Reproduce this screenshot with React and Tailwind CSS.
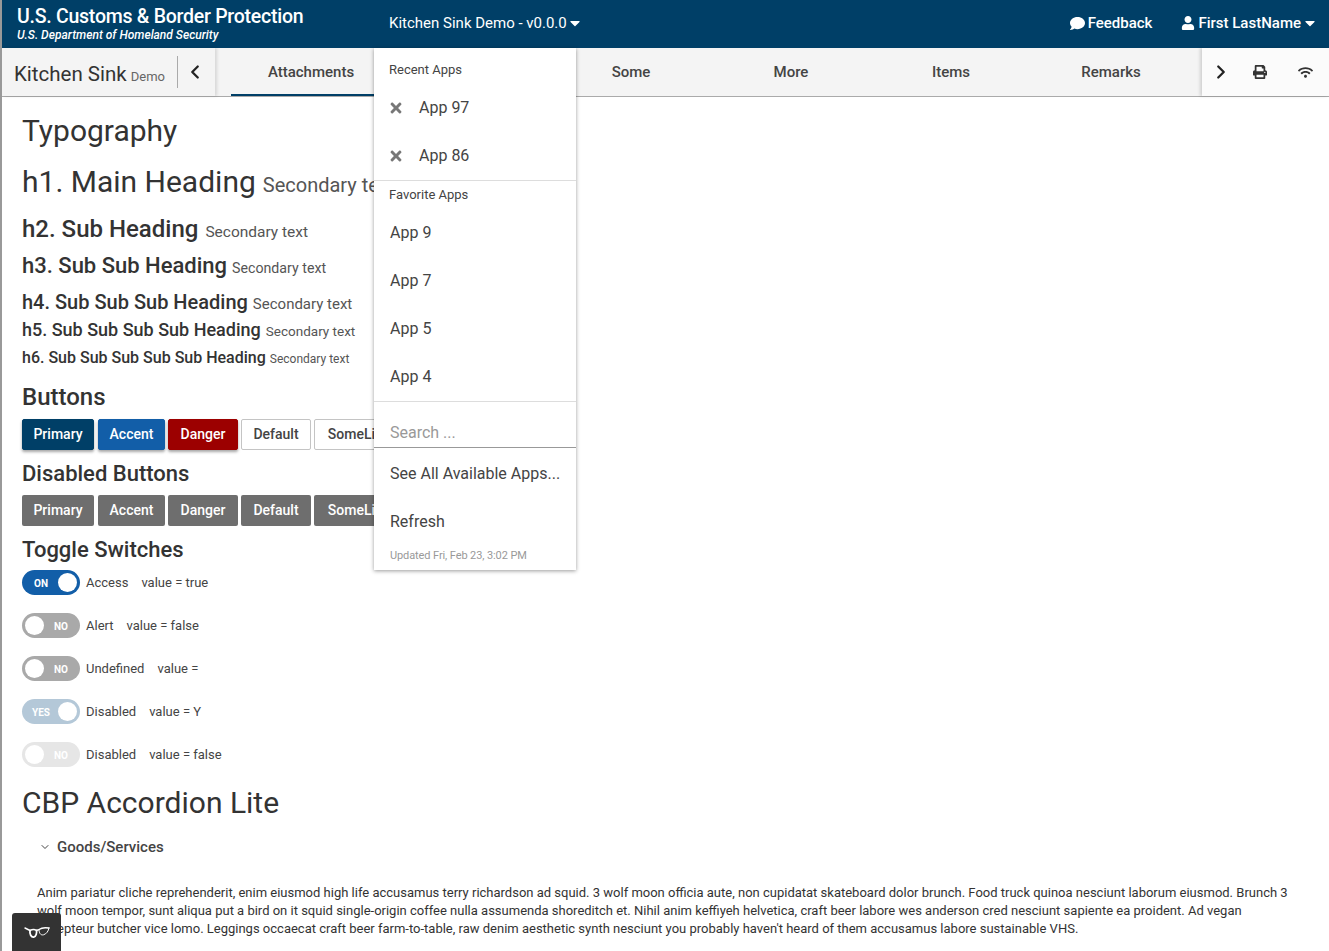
import { ChevronDown, ChevronLeft, ChevronRight } from 'lucide-react'
import { FaCaretDown, FaComment, FaPrint, FaTimes, FaUser, FaWifi } from 'react-icons/fa'

const TABS = ['Attachments', '', 'Some', 'More', 'Items', 'Remarks']

const HEADINGS = [
  { label: 'h1. Main Heading', head: 'text-[30px] h-[48px] pt-[10px]', sub: 'text-[20px] ml-[7px]', weight: 'font-normal' },
  { label: 'h2. Sub Heading', head: 'text-[24px] h-[36px] mt-[14px]', sub: 'text-[15.5px] ml-[7px]', weight: 'font-medium' },
  { label: 'h3. Sub Sub Heading', head: 'text-[22px] h-[32px] mt-[2px]', sub: 'text-[14.2px] ml-[5px]', weight: 'font-medium' },
  { label: 'h4. Sub Sub Sub Heading', head: 'text-[20px] h-[30px] mt-[6px]', sub: 'text-[15px] ml-[5px]', weight: 'font-medium' },
  { label: 'h5. Sub Sub Sub Sub Heading', head: 'text-[18px] h-[28px] -mt-[1px]', sub: 'text-[13.5px] ml-[5px]', weight: 'font-medium' },
  { label: 'h6. Sub Sub Sub Sub Sub Heading', head: 'text-[16px] h-[24px] mt-[2px]', sub: 'text-[12px] ml-[4px]', weight: 'font-medium' },
]

const BUTTONS = [
  { label: 'Primary', w: 'w-[72px] mr-[1px]', color: 'bg-[#003f67] text-white border-[#003f67] shadow-[0_2px_3px_rgba(0,0,0,0.35)]' },
  { label: 'Accent', w: 'w-[67px]', color: 'bg-[#125ea8] text-white border-[#125ea8] shadow-[0_2px_3px_rgba(0,0,0,0.35)]' },
  { label: 'Danger', w: 'w-[70px]', color: 'bg-[#9c0000] text-white border-[#9c0000] shadow-[0_2px_3px_rgba(0,0,0,0.35)]' },
  { label: 'Default', w: 'w-[70px]', color: 'bg-white text-[#444] border-[#c4c4c4]' },
  { label: 'SomeLink', w: 'w-[90px]', color: 'bg-white text-[#444] border-[#c4c4c4]' },
]

const TOGGLES = [
  { text: 'ON', on: true, track: 'bg-[#125ea8]', label: 'Access', value: 'value = true' },
  { text: 'NO', on: false, track: 'bg-[#a9a9a9]', label: 'Alert', value: 'value = false' },
  { text: 'NO', on: false, track: 'bg-[#a9a9a9]', label: 'Undefined', value: 'value =' },
  { text: 'YES', on: true, track: 'bg-[#b4c8d8]', label: 'Disabled', value: 'value = Y' },
  { text: 'NO', on: false, track: 'bg-[#e6e6e6]', label: 'Disabled', value: 'value = false' },
]

function Toggle({ text, on, track, label, value }) {
  return (
    <div className="flex items-center h-[25px] mb-[18px]">
      <div className={`flex items-center justify-between w-[58px] h-[25px] rounded-full px-[3px] ${track} ${on ? '' : 'flex-row-reverse'}`}>
        <span className="w-[32px] pt-[1px] text-center text-[10px] font-bold text-white">{text}</span>
        <span className="w-[19px] h-[19px] rounded-full bg-white" />
      </div>
      <span className="ml-[6px] text-[13px] text-[#444]">{label}</span>
      <span className="ml-[13px] text-[13px] text-[#444]">{value}</span>
    </div>
  )
}

function AppMenu() {
  return (
    <div className="absolute left-[372px] top-[48px] z-20 w-[202px] h-[522px] bg-white text-[#444] shadow-[0_1px_4px_rgba(0,0,0,0.4)]">
      <div className="h-[36px] pt-[14px] pl-[15px] text-[13px] leading-[16px]">Recent Apps</div>
      {['App 97', 'App 86'].map(a => (
        <div key={a} className="flex items-center h-[48px] pl-[15px] text-[16px]">
          <FaTimes size={16} className="text-[#777] mr-[15px] -ml-[1px]" />
          {a}
        </div>
      ))}
      <div className="border-t border-[#ddd] h-[29px] pt-[6px] pl-[15px] text-[13px] leading-[16px]">Favorite Apps</div>
      {['App 9', 'App 7', 'App 5', 'App 4'].map(a => (
        <div key={a} className="flex items-center h-[48px] pl-[16px] text-[16px]">{a}</div>
      ))}
      <div className="border-t border-[#ddd] pt-[21px]">
        <div className="border-b border-[#999] h-[25px] pl-[16px] text-[16px] leading-[19px] text-[#999]">Search ...</div>
      </div>
      <div className="flex items-center h-[52px] pl-[16px] text-[16px]">See All Available Apps...</div>
      <div className="flex items-center h-[44px] pl-[16px] text-[16px]">Refresh</div>
      <div className="pl-[16px] pt-[4px] text-[11px] tracking-[-0.1px] text-[#999]">Updated Fri, Feb 23, 3:02 PM</div>
    </div>
  )
}

export default function App() {
  return (
    <div className="relative h-[951px] overflow-hidden bg-white border-l-2 border-[#999] font-['Roboto',sans-serif] text-[#333]">
      {/* Top bar */}
      <header className="flex items-center h-[48px] bg-[#003f67] text-white -ml-[1px]">
        <div className="w-[372px] pl-[16px] shrink-0 -mt-[1px]">
          <div className="text-[19.5px] font-medium leading-[22px] tracking-[-0.25px]">U.S. Customs &amp; Border Protection</div>
          <div className="text-[12px] font-medium italic leading-[14px]">U.S. Department of Homeland Security</div>
        </div>
        <div className="flex items-center pl-[16px] pb-[2px] text-[15px]">
          Kitchen Sink Demo - v0.0.0
          <FaCaretDown size={16} />
        </div>
        <div className="flex items-center ml-auto pr-[11px] pb-[2px] text-[15px] font-medium">
          <FaComment size={15} className="mr-[3px]" />
          Feedback
          <FaUser size={14} className="ml-[29px] mr-[3px]" />
          First LastName
          <FaCaretDown size={16} className="ml-[1px]" />
        </div>
      </header>

      {/* Tab bar */}
      <div className="flex items-stretch h-[49px] bg-[#f4f4f4] border-b border-[#aaa]">
        <div className="flex items-center w-[213px] shrink-0 shadow-[2px_0_3px_rgba(0,0,0,0.12)] z-10">
          <div className="flex items-baseline whitespace-nowrap w-[176px] h-[32px] pl-[12px] border-r border-[#aaa] pt-[3px]">
            <span className="text-[20.5px]">Kitchen Sink</span>
            <span className="ml-[4px] text-[13px] text-[#666]">Demo</span>
          </div>
          <ChevronLeft size={22} strokeWidth={2.5} className="ml-[6px] text-[#222]" />
        </div>
        <div className="flex flex-1 pl-[16px]">
          {TABS.map((t, i) => (
            <div key={i} className={`flex items-center justify-center w-[160px] text-[15px] font-medium text-[#444] ${i === 0 ? 'pt-[2px] border-b-2 border-[#003f67]' : ''}`}>{t}</div>
          ))}
        </div>
        <div className="flex items-center w-[127px] shrink-0 bg-[#fbfbfb] shadow-[-2px_0_3px_rgba(0,0,0,0.15)] z-10">
          <ChevronRight size={22} strokeWidth={2.5} className="ml-[8px] text-[#222]" />
          <FaPrint size={14} className="ml-[21px] text-[#333]" />
          <FaWifi size={15} className="ml-[31px] text-[#333]" />
        </div>
      </div>

      <AppMenu />

      {/* Page content */}
      <main className="pl-[20px] pr-[40px]">
        <h2 className="text-[30px] leading-[36px] mt-[16px] text-[#333]">Typography</h2>
        {HEADINGS.map(h => (
          <div key={h.label} className={`flex items-baseline whitespace-nowrap ${h.head} ${h.weight}`}>
            {h.label}
            <span className={`font-normal text-[#555] ${h.sub}`}>Secondary text</span>
          </div>
        ))}

        <h3 className="text-[24px] leading-[32px] font-medium mt-[11px]">Buttons</h3>
        <div className="flex gap-[3px] mt-[6px]">
          {BUTTONS.map(b => (
            <div key={b.label} className={`flex items-center justify-center h-[31px] rounded-[2px] border text-[14px] font-medium ${b.w} ${b.color}`}>{b.label}</div>
          ))}
        </div>

        <h3 className="text-[22px] leading-[32px] font-medium mt-[8px]">Disabled Buttons</h3>
        <div className="flex gap-[3px] mt-[5px]">
          {BUTTONS.map(b => (
            <div key={b.label} className={`flex items-center justify-center h-[31px] rounded-[2px] bg-[#6e6e6e] text-white text-[14px] font-medium ${b.w}`}>{b.label}</div>
          ))}
        </div>

        <h3 className="text-[22px] leading-[32px] font-medium mt-[8px] mb-[4px]">Toggle Switches</h3>
        {TOGGLES.map((t, i) => <Toggle key={i} {...t} />)}

        <h2 className="text-[30px] leading-[36px] mt-[1px]">CBP Accordion Lite</h2>
        <div className="flex items-center mt-[15px] ml-[17px] text-[15px] font-medium text-[#444]">
          <ChevronDown size={12} className="mr-[6px]" />
          Goods/Services
        </div>
        <p className="mt-[25px] ml-[15px] text-[13px] leading-[18px] text-[#333]">
          Anim pariatur cliche reprehenderit, enim eiusmod high life accusamus terry richardson ad squid. 3 wolf moon officia aute, non cupidatat skateboard dolor brunch. Food truck quinoa nesciunt laborum eiusmod. Brunch 3 wolf moon tempor, sunt aliqua put a bird on it squid single-origin coffee nulla assumenda shoreditch et. Nihil anim keffiyeh helvetica, craft beer labore wes anderson cred nesciunt sapiente ea proident. Ad vegan excepteur butcher vice lomo. Leggings occaecat craft beer farm-to-table, raw denim aesthetic synth nesciunt you probably haven't heard of them accusamus labore sustainable VHS.
        </p>
      </main>

      {/* Floating glasses button */}
      <div className="absolute left-[10px] top-[913px] z-20 flex items-center justify-center w-[49px] h-[38px] rounded-t-[3px] bg-[#333]">
        <svg width="26" height="14" viewBox="0 0 26 14" fill="none" stroke="white" strokeWidth="1.4" strokeLinecap="round" strokeLinejoin="round">
          <path d="M1 3 L6 5.5 C8 4.5 11 4.5 12.5 5.5 C13.5 5 14.5 5 15 4.5 C17 3 22 2.5 25 3" />
          <path d="M6 5.5 C5.5 9 7 12.5 10 12 C12 11.5 13 8 12.5 5.5" strokeWidth="1.8" />
          <path d="M15 4.5 C15 8 16.5 10.5 19.5 9.8 C22.5 9 24.5 6 25 3" strokeWidth="1" />
        </svg>
      </div>
    </div>
  )
}
